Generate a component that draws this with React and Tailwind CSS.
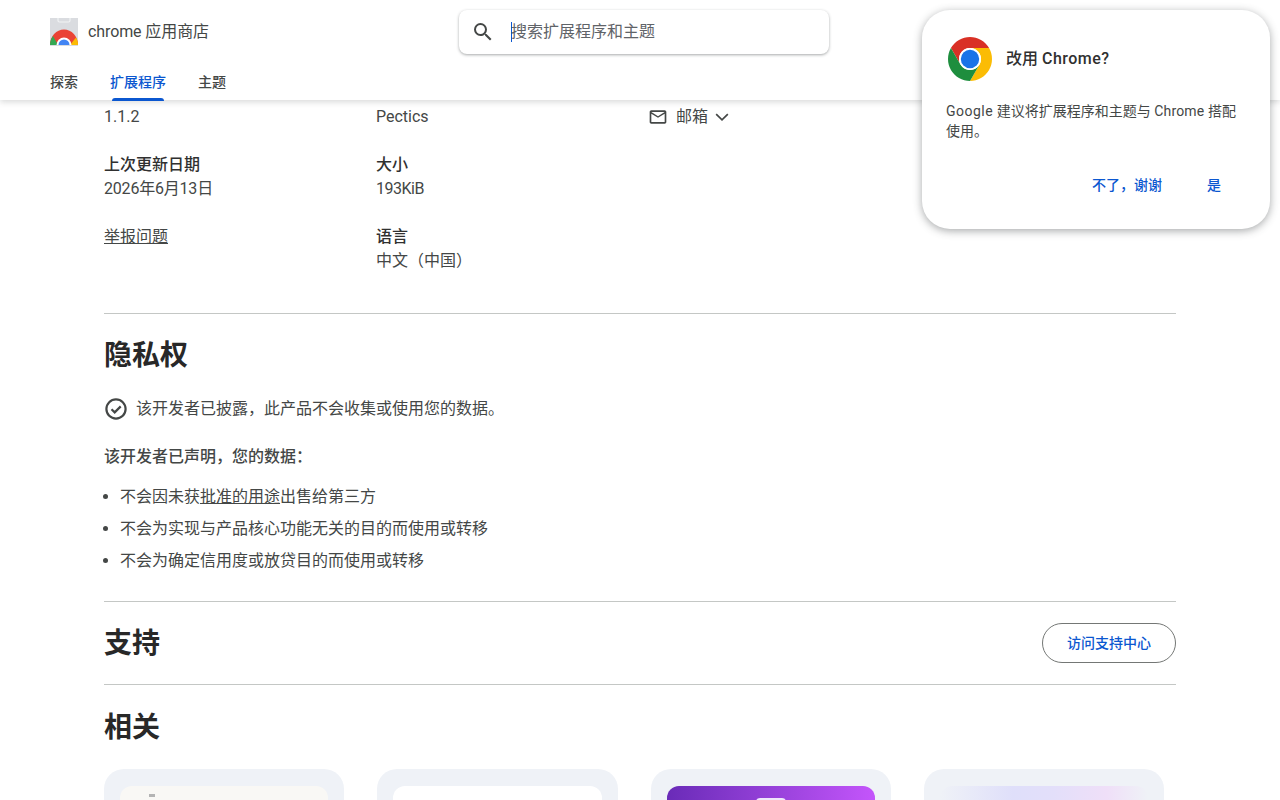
import React from 'react';

const font = { fontFamily: 'Roboto, "Noto Sans CJK SC", sans-serif' };

const StoreLogo = () => (
    <svg width="28" height="28" viewBox="0 0 28 28" className="shrink-0">
        <rect x="0" y="0" width="28" height="28" fill="#dadce0" />
        <path d="M8 0v2.5A1.5 1.5 0 0 0 9.5 4h9A1.5 1.5 0 0 0 20 2.5V0" fill="none" stroke="#f1f3f4" strokeWidth="1.2" />
        <path d="M0 27a14 15.5 0 0 1 28 0z" fill="#ea4335" />
        <path d="M0 27c0-3.5 1-6.5 3-9l5 9z" fill="#34a853" />
        <path d="M28 27c0-3-.8-5.5-2-7.5L20 27z" fill="#fbbc04" />
        <path d="M6.5 27a7.5 7.5 0 0 1 15 0z" fill="#fff" />
        <path d="M8.5 27a5.5 5.5 0 0 1 11 0z" fill="#4285f4" />
    </svg>
);

const ChromeLogo = () => (
    <svg width="44" height="44" viewBox="0 0 48 48" className="shrink-0">
        <path d="M44.78 12A24 24 0 0 0 3.22 12L13.61 30A12 12 0 0 1 24 12z" fill="#d93025" />
        <path d="M24 48A24 24 0 0 0 44.78 12H24A12 12 0 0 1 34.39 30z" fill="#fbbc04" />
        <path d="M3.22 12A24 24 0 0 0 24 48L34.39 30A12 12 0 0 1 13.61 30z" fill="#1e8e3e" />
        <circle cx="24" cy="24" r="12" fill="#fff" />
        <circle cx="24" cy="24" r="10" fill="#1a73e8" />
    </svg>
);

const Divider = () => <div className="h-px bg-[#c4c7c5]" />;

const App = () => {
    return (
        <div style={font} className="relative h-screen overflow-hidden bg-white text-[#444746]">
            <header className="relative z-10 h-[100px] bg-white shadow-[0_2px_6px_rgba(60,64,67,0.2)] px-[50px]">
                <div className="flex items-center h-[64px] relative">
                    <StoreLogo />
                    <span className="ml-[10px] text-[16px] tracking-[-0.1px] text-[#444746]">chrome 应用商店</span>
                    <div className="absolute left-[409px] top-[10px] w-[370px] h-[44px] rounded-lg bg-white shadow-[0_1px_3px_rgba(60,64,67,0.45)] flex items-center">
                        <svg width="24" height="24" viewBox="0 0 24 24" className="ml-3" fill="#444746">
                            <path d="M15.5 14h-.79l-.28-.27A6.47 6.47 0 0 0 16 9.5 6.5 6.5 0 1 0 9.5 16c1.61 0 3.09-.59 4.23-1.57l.27.28v.79l5 4.99L20.49 19l-4.99-5zm-6 0C7.01 14 5 11.99 5 9.5S7.01 5 9.5 5 14 7.01 14 9.5 11.99 14 9.5 14z" />
                        </svg>
                        <span className="ml-[16px] -mr-px w-px h-[20px] bg-[#0b57d0]" />
                        <span className="text-[16px] text-[#5f6368]">搜索扩展程序和主题</span>
                    </div>
                </div>
                <nav className="flex gap-[32px] text-[14px] font-medium h-[36px] items-center">
                    <span className="text-[#444746]">探索</span>
                    <span className="relative text-[#0b57d0]">
                        扩展程序
                        <span className="absolute left-[2px] right-[2px] top-[26px] h-[3px] rounded-t-sm bg-[#0b57d0]" />
                    </span>
                    <span className="text-[#444746]">主题</span>
                </nav>
            </header>

            <main className="px-[104px] text-[16px] leading-6">
                <div className="grid grid-cols-[272px_272px_272px_1fr] pt-[4px]">
                    <div className="pt-px">
                        <div>1.1.2</div>
                        <div className="mt-6 font-medium text-[#303030]">上次更新日期</div>
                        <div className="tracking-[-0.2px]">2026年6月13日</div>
                        <div className="mt-6 underline">举报问题</div>
                    </div>
                    <div className="pt-px">
                        <div>Pectics</div>
                        <div className="mt-6 font-medium text-[#303030]">大小</div>
                        <div className="tracking-[-0.5px]">193KiB</div>
                        <div className="mt-6 font-medium text-[#303030]">语言</div>
                        <div>中文（中国）</div>
                    </div>
                    <div className="pt-px">
                        <div className="flex items-center">
                            <svg width="20" height="20" viewBox="0 0 24 24" fill="#444746" className="mr-2">
                                <path d="M20 4H4c-1.1 0-1.99.9-1.99 2L2 18c0 1.1.9 2 2 2h16c1.1 0 2-.9 2-2V6c0-1.1-.9-2-2-2zm0 14H4V8l8 5 8-5v10zm-8-7L4 6h16l-8 5z" />
                            </svg>
                            邮箱
                            <svg width="20" height="20" viewBox="0 0 24 24" fill="none" stroke="#444746" strokeWidth="2" className="ml-1">
                                <path d="m5 8.5 7 7 7-7" />
                            </svg>
                        </div>
                    </div>
                </div>

                <div className="mt-[40px]"><Divider /></div>

                <h2 className="mt-[22px] text-[28px] leading-[40px] font-semibold text-[#282828]">隐私权</h2>
                <div className="mt-[21px] flex items-center">
                    <svg width="24" height="24" viewBox="0 0 24 24" fill="none" stroke="#444746" strokeWidth="2.2" className="mr-2">
                        <circle cx="12" cy="12" r="9.6" />
                        <path d="m7.5 12.2 3.2 3.2 6-6" />
                    </svg>
                    该开发者已披露，此产品不会收集或使用您的数据。
                </div>
                <div className="mt-6 font-medium">该开发者已声明，您的数据：</div>
                <ul className="mt-4 list-disc pl-4 space-y-2">
                    <li>不会因未获<span className="underline">批准的用途</span>出售给第三方</li>
                    <li>不会为实现与产品核心功能无关的目的而使用或转移</li>
                    <li>不会为确定信用度或放贷目的而使用或转移</li>
                </ul>

                <div className="mt-[28px]"><Divider /></div>

                <div className="flex items-center justify-between mt-[21px]">
                    <h2 className="h-10 text-[28px] leading-[42px] font-semibold text-[#282828]">支持</h2>
                    <button className="h-[40px] w-[134px] rounded-full border border-[#747775] text-[14px] font-medium text-[#0b57d0]">访问支持中心</button>
                </div>

                <div className="mt-[21px]"><Divider /></div>

                <h2 className="mt-[23px] text-[28px] leading-[40px] font-semibold text-[#282828]">相关</h2>

                <div className="mt-[21px] flex gap-[33px]">
                    <div className="w-[240px] h-[120px] shrink-0 rounded-[20px] bg-[#eff2f7] px-4 pt-[17px]">
                        <div className="h-[100px] rounded-t-xl bg-[#f9f8f5] pt-[8px] pl-[29px]">
                            <div className="w-[6px] h-[3px] bg-[#b4b4b4]" />
                        </div>
                    </div>
                    <div className="w-[241px] h-[120px] shrink-0 rounded-[20px] bg-[#eff2f7] px-4 pt-[17px]">
                        <div className="h-[100px] rounded-t-xl bg-white" />
                    </div>
                    <div className="w-[240px] h-[120px] shrink-0 rounded-[20px] bg-[#eff2f7] px-4 pt-[17px]">
                        <div className="h-[100px] rounded-t-xl bg-gradient-to-r from-[#6a2bb8] to-[#c455fb] pt-[12px] pl-[89px]">
                            <div className="w-[30px] h-[20px] rounded-t-sm bg-[#efe6fb]" />
                        </div>
                    </div>
                    <div className="w-[240px] h-[120px] shrink-0 rounded-[20px] bg-[#eff2f7] px-4 pt-[17px]">
                        <div className="h-[100px] rounded-t-xl bg-[linear-gradient(90deg,#eff2f7,#dfdffa_35%,#e3dffa_55%,#efdff8_80%,#eff2f7)]" />
                    </div>
                </div>
            </main>

            <div className="absolute z-20 left-[922px] top-[10px] w-[348px] h-[219px] rounded-[28px] bg-white shadow-[0_2px_8px_rgba(60,64,67,0.45)] pl-[24px] pr-[30px]">
                <div className="flex items-center pt-[27px]">
                    <div className="ml-[2px]"><ChromeLogo /></div>
                    <span className="ml-[14px] text-[16px] font-medium text-[#303030]">改用 <span className="tracking-[0.5px]">Chrome?</span></span>
                </div>
                <p className="mt-[20px] text-[14px] leading-[20px] text-[#444746]"><span className="tracking-[0.5px]">Google</span> 建议将扩展程序和主题与 <span className="tracking-[0.2px]">Chrome</span> 搭配使用。</p>
                <div className="mt-[34px] -mr-[6px] flex justify-end text-[14px] font-medium text-[#0b57d0] leading-5">
                    <span>不了，谢谢</span>
                    <span className="ml-[45px] mr-[25px]">是</span>
                </div>
            </div>
        </div>
    );
};

export default App;
